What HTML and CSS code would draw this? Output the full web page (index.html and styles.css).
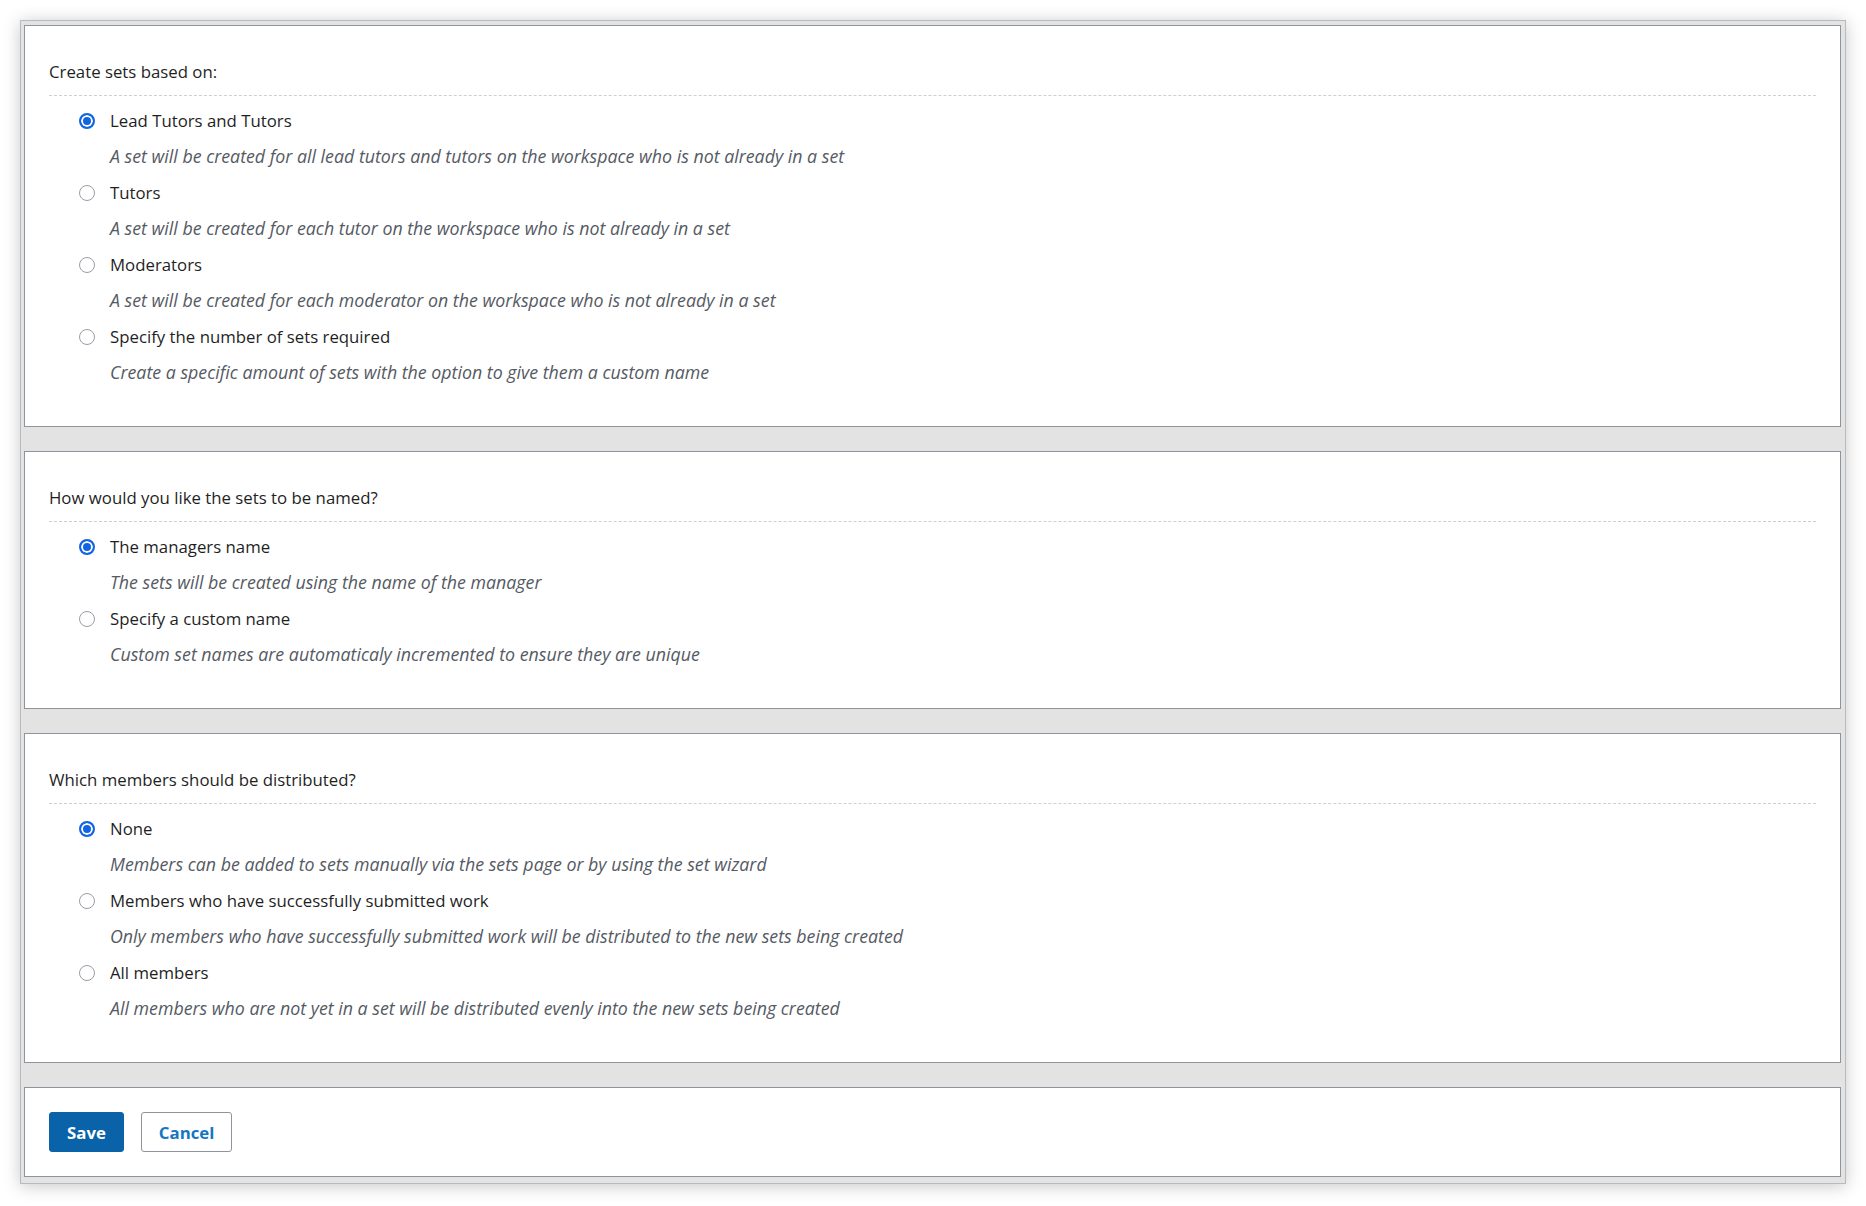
FILE: index.html
```html
<!doctype html>
<html lang="en-gb">
  <head>
    <title>Create Sets</title>
    <link rel="stylesheet" href="styles.css">
  </head>
  <body>
    <div id="frame">

      <div class="panel">
        <p class="panelTitle">Create sets based on:</p>
        <div class="options">
          <div class="option">
            <label class="optLabel"><input type="radio" name="basis" checked><span>Lead Tutors and Tutors</span></label>
            <p class="optDesc">A set will be created for all lead tutors and tutors on the workspace who is not already in a set</p>
          </div>
          <div class="option">
            <label class="optLabel"><input type="radio" name="basis"><span>Tutors</span></label>
            <p class="optDesc">A set will be created for each tutor on the workspace who is not already in a set</p>
          </div>
          <div class="option">
            <label class="optLabel"><input type="radio" name="basis"><span>Moderators</span></label>
            <p class="optDesc">A set will be created for each moderator on the workspace who is not already in a set</p>
          </div>
          <div class="option">
            <label class="optLabel"><input type="radio" name="basis"><span>Specify the number of sets required</span></label>
            <p class="optDesc">Create a specific amount of sets with the option to give them a custom name</p>
          </div>
        </div>
      </div>

      <div class="panel">
        <p class="panelTitle">How would you like the sets to be named?</p>
        <div class="options">
          <div class="option">
            <label class="optLabel"><input type="radio" name="naming" checked><span>The managers name</span></label>
            <p class="optDesc">The sets will be created using the name of the manager</p>
          </div>
          <div class="option">
            <label class="optLabel"><input type="radio" name="naming"><span>Specify a custom name</span></label>
            <p class="optDesc">Custom set names are automaticaly incremented to ensure they are unique</p>
          </div>
        </div>
      </div>

      <div class="panel">
        <p class="panelTitle">Which members should be distributed?</p>
        <div class="options">
          <div class="option">
            <label class="optLabel"><input type="radio" name="members" checked><span>None</span></label>
            <p class="optDesc">Members can be added to sets manually via the sets page or by using the set wizard</p>
          </div>
          <div class="option">
            <label class="optLabel"><input type="radio" name="members"><span>Members who have successfully submitted work</span></label>
            <p class="optDesc">Only members who have successfully submitted work will be distributed to the new sets being created</p>
          </div>
          <div class="option">
            <label class="optLabel"><input type="radio" name="members"><span>All members</span></label>
            <p class="optDesc">All members who are not yet in a set will be distributed evenly into the new sets being created</p>
          </div>
        </div>
      </div>

      <div class="panel" id="actions">
        <button id="save">Save</button>
        <button id="cancel">Cancel</button>
      </div>

    </div>
  </body>
</html>
```

FILE: styles.css
```css
body {
  margin: 0;
  padding: 20px;
  background-color: #ffffff;
  font-family: "Open Sans", "Noto Sans", sans-serif;
  font-size: 16.8px;
  color: #1f1f1f;
}

#frame {
  background-color: #e3e3e3;
  border: 1px solid #b7bbc0;
  padding: 4px 4px 6px 3px;
  box-shadow: 0 2px 16px rgba(0, 0, 0, 0.22);
}

.panel {
  background-color: #ffffff;
  border: 1px solid #8e949b;
  padding: 34px 24px 29px 24px;
  margin-bottom: 24px;
}

.panelTitle {
  margin: 0;
  line-height: 24px;
  padding-bottom: 11px;
  border-bottom: 1px dashed #cfcfcf;
}

.options {
  padding-top: 13px;
}

.option {
  padding-left: 30px;
}

.optLabel {
  display: flex;
  align-items: center;
  height: 24px;
  line-height: 24px;
}

.optLabel input {
  appearance: none;
  width: 16px;
  height: 16px;
  margin: 0 15px 0 0;
  border: 1px solid #9b9ca6;
  border-radius: 50%;
  background-color: #ffffff;
}

.optLabel input:checked {
  border: 2px solid #1264e3;
  background-color: #1264e3;
  box-shadow: inset 0 0 0 2px #ffffff;
}

.optDesc {
  margin: 11px 0 13px 31px;
  line-height: 24px;
  font-size: 17.8px;
  font-style: italic;
  color: #555a63;
}

#actions {
  display: flex;
  gap: 17px;
  padding: 24px;
  margin-bottom: 0;
}

button {
  height: 40px;
  padding: 0 17px;
  border-radius: 3px;
  font-family: "Open Sans", "Noto Sans", sans-serif;
  font-size: 16.8px;
  font-weight: 700;
}

#save {
  background-color: #0a63a8;
  border: 1px solid #0a63a8;
  color: #ffffff;
}

#cancel {
  background-color: #ffffff;
  border: 1px solid #8e949b;
  color: #1576c2;
}
```
